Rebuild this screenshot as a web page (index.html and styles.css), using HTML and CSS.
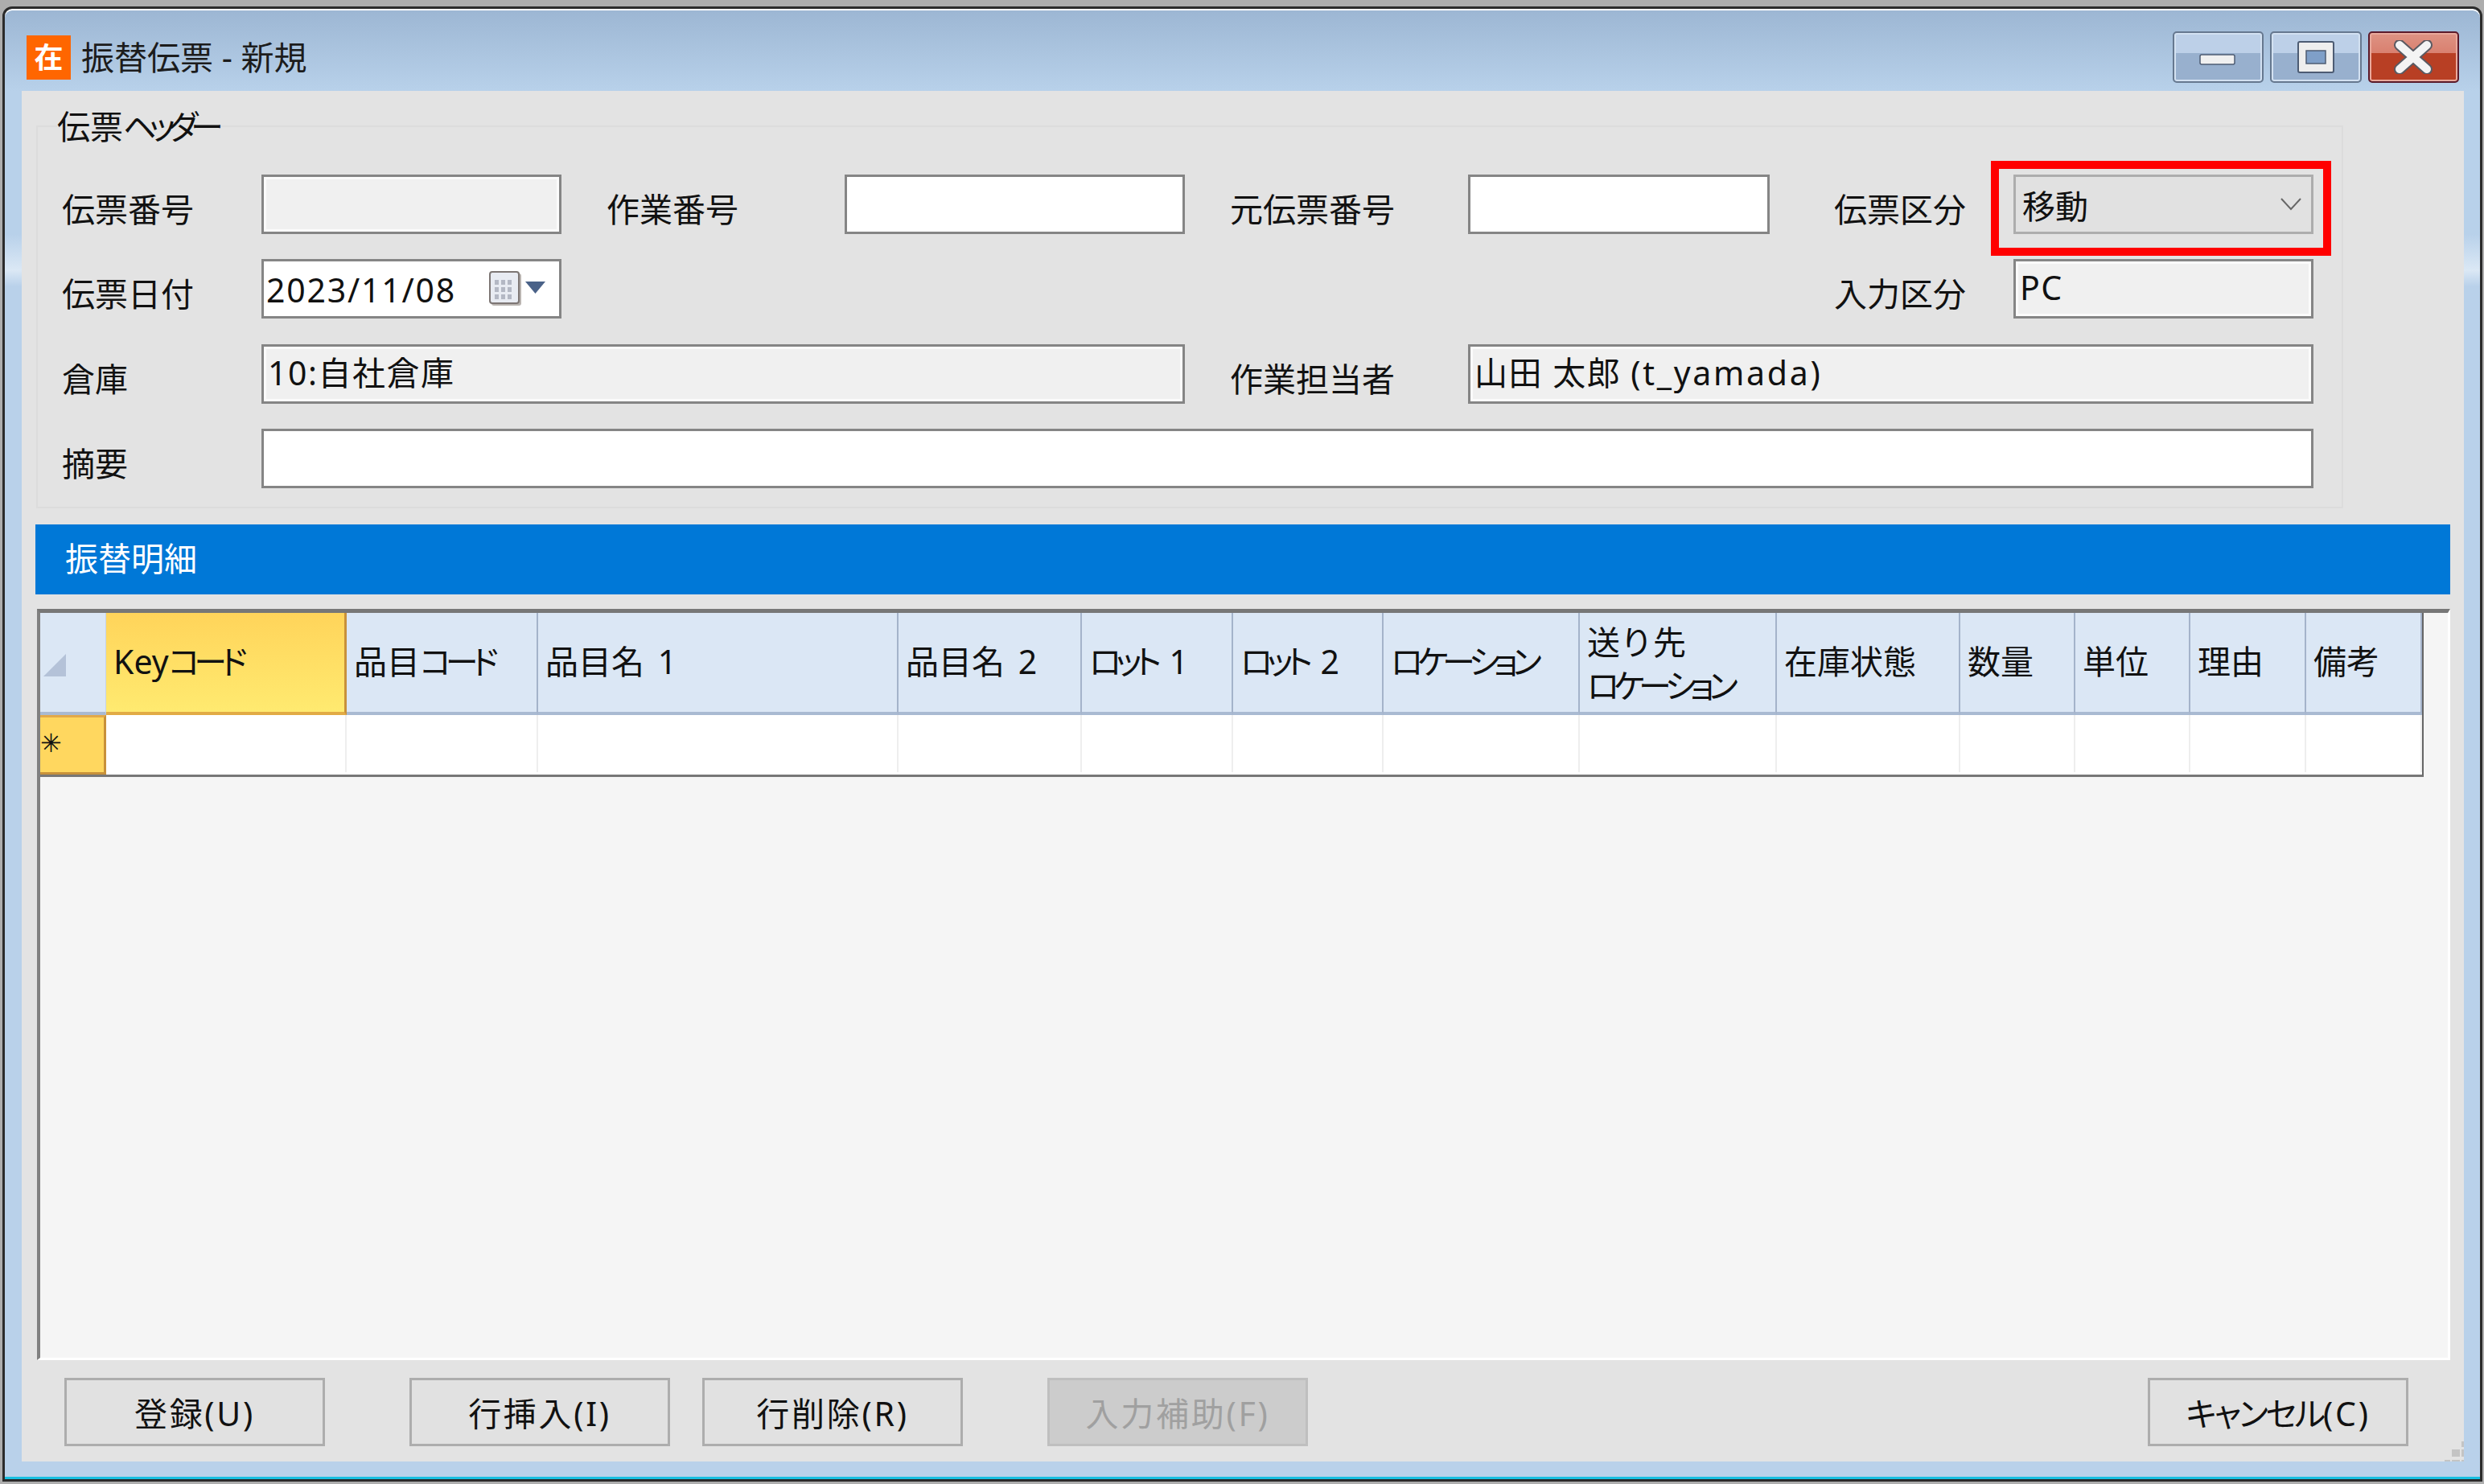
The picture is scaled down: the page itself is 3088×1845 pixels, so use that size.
FILE: index.html
```html
<!doctype html>
<html lang="ja">
	<head>
		<meta charset="UTF-8">
		<title>振替伝票 - 新規</title>
		<link rel="stylesheet" href="styles.css">
	</head>

	<body>
		<div class="window">
			<div class="titlebar">
				<div class="app-icon">在</div>
				<div class="title">振替伝票 - 新規</div>
				<div class="controls">
					<div class="ctl ctl-min">
						<svg width="46" height="15" viewBox="0 0 46 15"><rect x="1" y="1" width="43" height="12" rx="2" fill="#f0f0f0" stroke="#4d5c73" stroke-width="1.5"/></svg>
					</div>
					<div class="ctl ctl-max">
						<svg width="46" height="40" viewBox="0 0 46 40"><rect x="1" y="1" width="44" height="38" rx="2" fill="#eeeeee" stroke="#4d5c73" stroke-width="2"/><rect x="11" y="12" width="24" height="16" fill="#7f9fc8" stroke="#4d5c73" stroke-width="1.5"/></svg>
					</div>
					<div class="ctl ctl-close">
						<svg width="48" height="42" viewBox="0 0 48 42"><path d="M7 6 L41 36 M41 6 L7 36" stroke="#5a5a62" stroke-width="14" stroke-linecap="round"/><path d="M7 6 L41 36 M41 6 L7 36" stroke="#f4f4f4" stroke-width="10" stroke-linecap="round"/></svg>
					</div>
				</div>
			</div>

			<div class="client">
				<fieldset class="group">
					<legend>伝票<span class="kana kana-tight">ヘッダー</span></legend>
					<div class="form">
						<label class="lbl lbl-first">伝票番号</label>
						<div class="field readonly"></div>
						<label class="lbl">作業番号</label>
						<div class="field"></div>
						<label class="lbl">元伝票番号</label>
						<div class="field"></div>
						<label class="lbl lbl-far">伝票区分</label>
						<div class="combo">
							<span>移動</span>
							<svg width="26" height="16" viewBox="0 0 26 16"><path d="M1 1 L13 14 L25 1" fill="none" stroke="#666" stroke-width="2"/></svg>
							<div class="highlight"></div>
						</div>

						<label class="lbl lbl-first">伝票日付</label>
						<div class="field date">
							<span>2023/11/08</span>
							<svg class="cal" width="72" height="44" viewBox="0 0 72 44">
								<rect x="3" y="3" width="37" height="40" rx="3" fill="#b9b4b0"/>
								<rect x="1" y="1" width="36" height="39" rx="3" fill="#e8ebf2" stroke="#7d7674" stroke-width="2"/>
								<path d="M7 11h5v6h-5z M15 11h5v6h-5z M23 11h5v6h-5z M7 20h5v6h-5z M15 20h5v6h-5z M23 20h5v6h-5z M7 29h5v6h-5z M15 29h5v6h-5z M23 29h5v6h-5z" fill="#b4b8c4"/>
								<path d="M45 13 H70 L57.5 28 Z" fill="#4a6288"/>
							</svg>
						</div>
						<div class="spacer"></div>
						<label class="lbl lbl-far">入力区分</label>
						<div class="field readonly value">PC</div>

						<label class="lbl lbl-first">倉庫</label>
						<div class="field readonly value span-3">10:自社倉庫</div>
						<label class="lbl">作業担当者</label>
						<div class="field readonly value span-3">山田 太郎 <span class="user-id">(t_yamada)</span></div>

						<label class="lbl lbl-first">摘要</label>
						<div class="field span-7"></div>
					</div>
				</fieldset>

				<div class="band">振替明細</div>

				<div class="panel">
					<div class="grid">
						<div class="corner"><svg width="28" height="28" viewBox="0 0 28 28"><path d="M28 0 V28 H0 Z" fill="#b4c2d8"/></svg></div>
						<div class="th th-key"><span>Key<span class="kana">コード</span></span></div>
						<div class="th"><span>品目<span class="kana">コード</span></span></div>
						<div class="th">品目名 1</div>
						<div class="th">品目名 2</div>
						<div class="th"><span><span class="kana">ロット</span> 1</span></div>
						<div class="th"><span><span class="kana">ロット</span> 2</span></div>
						<div class="th"><span class="kana">ロケーション</span></div>
						<div class="th th-two">送り先<br><span class="kana">ロケーション</span></div>
						<div class="th">在庫状態</div>
						<div class="th">数量</div>
						<div class="th">単位</div>
						<div class="th">理由</div>
						<div class="th">備考</div>

						<div class="rowhead">✳</div>
						<div class="td"></div>
						<div class="td"></div>
						<div class="td"></div>
						<div class="td"></div>
						<div class="td"></div>
						<div class="td"></div>
						<div class="td"></div>
						<div class="td"></div>
						<div class="td"></div>
						<div class="td"></div>
						<div class="td"></div>
						<div class="td"></div>
						<div class="td"></div>
					</div>
				</div>

				<div class="actions">
					<button>登録(U)</button>
					<button class="gap-big">行挿入(I)</button>
					<button>行削除(R)</button>
					<button class="gap-big" disabled>入力補助(F)</button>
					<button class="cancel"><span class="kana kana-loose">キャンセル</span>(C)</button>
				</div>

				<svg class="grip" width="24" height="25" viewBox="0 0 24 25">
					<rect x="9" y="10" width="10" height="9" fill="#c4c4c4"/>
					<rect x="21" y="0" width="3" height="7" fill="#c4c4c4"/>
					<rect x="21" y="10" width="3" height="9" fill="#c4c4c4"/>
					<rect x="0" y="23" width="7" height="2" fill="#c4c4c4"/>
					<rect x="9" y="23" width="10" height="2" fill="#c4c4c4"/>
					<rect x="21" y="23" width="3" height="2" fill="#c4c4c4"/>
				</svg>
			</div>
		</div>
	</body>
</html>
```

FILE: styles.css
```css
* {
	padding: 0;
	margin: 0;
	box-sizing: border-box;
}
html, body {
	width: 3088px;
	height: 1845px;
	overflow: hidden;
}
body {
	background-color: #adadad;
	padding: 8px 2px 0 3px;
	color: #111;
	font-family: "Noto Sans", "Noto Sans CJK JP", sans-serif;
	font-size: 41px;
}
.kana {
	font-feature-settings: "palt";
	letter-spacing: -7px;
}
.kana-tight {
	letter-spacing: -9px;
}
.kana-loose {
	letter-spacing: -3px;
}
.window {
	height: 1834px;
	border: 3px solid #2b2b2b;
	border-radius: 12px 12px 0 0;
	background: linear-gradient(#9cb6d3 0, #b8d1ea 102px, #b8d1ea 280px, #dbe8f5 325px, #b9d1ea 345px);
	box-shadow: inset 0 2px #fff, inset 0 -3px #17bfe0;
}

/* title bar */
.titlebar {
	display: flex;
	align-items: center;
	height: 102px;
	padding: 18px 26px 0 27px;
}
.app-icon {
	width: 55px;
	height: 55px;
	background-color: #ff6600;
	color: #fff;
	font-size: 36px;
	font-weight: 700;
	line-height: 55px;
	text-align: center;
}
.title {
	margin-left: 13px;
	line-height: 50px;
	color: #1c1c1c;
}
.controls {
	display: flex;
	gap: 8px;
	margin-left: auto;
	margin-top: -1px;
}
.ctl {
	display: flex;
	align-items: center;
	justify-content: center;
	width: 113.5px;
	height: 64px;
	border: 2px solid #66788f;
	border-radius: 5px;
	box-shadow: inset 0 0 0 2px #d3e1f1;
	background: linear-gradient(#bdd0e8 0, #bdd0e8 42%, #98b0ce 42%, #98b0ce 100%);
}
.ctl-min svg {
	margin-top: 8px;
}
.ctl-close {
	border-color: #5b1a2a;
	box-shadow: inset 0 0 0 2px #e9a99c;
	background: linear-gradient(#de9384 0, #d9806f 42%, #b83f24 42%, #b83f24 100%);
}

/* client area */
.client {
	position: relative;
	height: 1704px;
	margin: 0 20px 0 21px;
	padding-top: 24px;
	background-color: #e3e3e3;
}
.group {
	min-width: 0;
	height: 495px;
	margin: 0 150px 0 18px;
	padding: 0 0 0 30px;
	border: 2px solid #dcdcdc;
}
legend {
	margin-left: -6px;
	line-height: 40px;
	white-space: nowrap;
}
.form {
	display: grid;
	grid-template-columns: 248px 373px 352px 423px 352px 375px 303px 373px;
	grid-template-rows: repeat(4, 74px);
	row-gap: 31.3px;
	margin-top: 40px;
}
.lbl {
	padding: 14px 0 0 56px;
	line-height: 58px;
	white-space: nowrap;
}
.lbl-first {
	padding-left: 0;
}
.lbl-far {
	padding-left: 80px;
}
.field {
	border: 3px solid #858585;
	background-color: #fff;
	box-shadow: inset 0 0 0 1px #fff;
	line-height: 65px;
}
.readonly {
	background-color: #f0f0f0;
	box-shadow: inset 0 0 0 3px #fbfbfb;
}
.value {
	padding-left: 5px;
	letter-spacing: 1.5px;
}
.user-id {
	letter-spacing: 2.7px;
}
.span-3 {
	grid-column: span 3;
}
.span-7 {
	grid-column: span 7;
}
.date {
	display: flex;
	align-items: center;
	padding-left: 3px;
	letter-spacing: 1.8px;
}
.date span {
	padding-top: 3px;
}
.cal {
	margin-left: auto;
	margin-right: 15px;
}
.spacer {
	grid-column: span 4;
}
.combo {
	position: relative;
	display: flex;
	align-items: center;
	justify-content: space-between;
	padding: 0 12px 0 8px;
	border: 3px solid #adadad;
	background-color: #e1e1e1;
}
.highlight {
	position: absolute;
	left: -31px;
	right: -25px;
	top: -20px;
	bottom: -30px;
	border: 10px solid #ff0000;
}

/* detail grid */
.band {
	height: 87px;
	margin: 20px 17px 0 17px;
	padding-left: 37px;
	background-color: #0078d7;
	color: #fff;
	line-height: 84px;
}
.panel {
	height: 934px;
	margin: 18px 17px 0 19px;
	background-color: #f5f5f5;
	border-style: solid;
	border-width: 5px 3px 3px 4px;
	border-color: #777 #fff #fff #808080;
}
.grid {
	display: grid;
	grid-template-columns: 82px 299px 238px 448px 228px 188px 187px 244px 245px 228px 143px 143px 144px 144px;
	grid-template-rows: 127px 74px;
	width: 2963px;
	border-right: 2px solid #666;
	border-bottom: 3px solid #777;
	background-color: #fff;
}
.corner, .th {
	background-color: #dbe7f5;
	border-bottom: 4px solid #a9bad2;
}
.corner {
	display: flex;
	align-items: flex-end;
	padding: 0 0 44px 4px;
	border-right: 1px solid #c6d3e4;
}
.th {
	display: flex;
	align-items: center;
	padding: 0 0 4px 9px;
	border-right: 2px solid #a4b3ca;
	line-height: 54px;
	white-space: pre;
	word-spacing: 6px;
}
.th-two {
	display: block;
	padding-top: 9px;
	padding-bottom: 0;
}
.th-key {
	background: linear-gradient(#ffd45a, #ffea70);
	border-right: 3px solid #c8913a;
	border-bottom-color: #e2ab45;
}
.rowhead {
	background-color: #ffd75f;
	border-right: 3px solid #c8913a;
	border-bottom: 3px solid #c8913a;
	border-top: 3px solid #e2a94a;
	font-family: "DejaVu Sans", sans-serif;
	font-size: 32px;
	line-height: 64px;
}
.td {
	margin-bottom: 3px;
	border-right: 2px solid #eee;
}

/* buttons */
.actions {
	display: flex;
	margin-top: 22px;
	padding: 0 69px 0 53px;
}
button {
	width: 324px;
	height: 85px;
	margin-left: 40px;
	padding-bottom: 2px;
	border: 3px solid #adadad;
	background-color: #e1e1e1;
	color: #111;
	font-family: inherit;
	font-size: 41px;
	letter-spacing: 2.7px;
}
button:first-child {
	margin-left: 0;
}
button.gap-big {
	margin-left: 105px;
}
button:disabled {
	background-color: #cccccc;
	border-color: #bfbfbf;
	color: #a0a0a0;
}
button.cancel {
	margin-left: auto;
}
.grip {
	position: absolute;
	right: 0;
	bottom: 0;
}
```
